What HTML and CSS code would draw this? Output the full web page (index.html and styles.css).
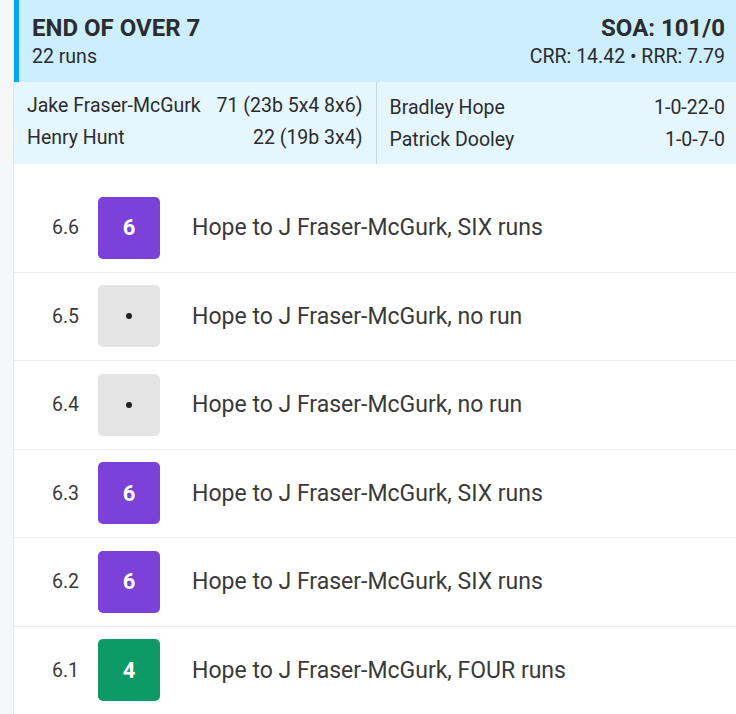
FILE: index.html
```html
<!DOCTYPE html>
<html lang="en">
<head>
  <meta charset="UTF-8" />
  <meta name="viewport" content="width=device-width, initial-scale=1.0" />
  <title>End of over 7</title>
  <link rel="stylesheet" href="styles.css">
</head>
<body>
  <div class="page">
    <div class="card">
      <div class="over-head">
        <div class="over-left">
          <div class="over-title">END OF OVER 7</div>
          <div class="over-runs">22 runs</div>
        </div>
        <div class="over-right">
          <div class="over-score">SOA: 101/0</div>
          <div class="over-rates">CRR: 14.42 • RRR: 7.79</div>
        </div>
      </div>

      <div class="over-players">
        <div class="players-col batters">
          <div class="player-line"><span>Jake Fraser-McGurk</span><span>71 (23b 5x4 8x6)</span></div>
          <div class="player-line"><span>Henry Hunt</span><span>22 (19b 3x4)</span></div>
        </div>
        <div class="players-col bowlers">
          <div class="player-line"><span>Bradley Hope</span><span>1-0-22-0</span></div>
          <div class="player-line"><span>Patrick Dooley</span><span>1-0-7-0</span></div>
        </div>
      </div>

      <div class="balls">
        <div class="ball-row">
          <span class="ball-num">6.6</span>
          <span class="ball six">6</span>
          <span class="ball-text">Hope to J Fraser-McGurk, SIX runs</span>
        </div>
        <div class="ball-row">
          <span class="ball-num">6.5</span>
          <span class="ball dot"><i class="dot-mark"></i></span>
          <span class="ball-text">Hope to J Fraser-McGurk, no run</span>
        </div>
        <div class="ball-row">
          <span class="ball-num">6.4</span>
          <span class="ball dot"><i class="dot-mark"></i></span>
          <span class="ball-text">Hope to J Fraser-McGurk, no run</span>
        </div>
        <div class="ball-row">
          <span class="ball-num">6.3</span>
          <span class="ball six">6</span>
          <span class="ball-text">Hope to J Fraser-McGurk, SIX runs</span>
        </div>
        <div class="ball-row">
          <span class="ball-num">6.2</span>
          <span class="ball six">6</span>
          <span class="ball-text">Hope to J Fraser-McGurk, SIX runs</span>
        </div>
        <div class="ball-row">
          <span class="ball-num">6.1</span>
          <span class="ball four">4</span>
          <span class="ball-text">Hope to J Fraser-McGurk, FOUR runs</span>
        </div>
      </div>
    </div>
  </div>
</body>
</html>
```

FILE: styles.css
```css
body {
  margin: 0;
  font-family: Roboto, "Liberation Sans", sans-serif;
  color: #2b2c2d;
  background-color: #f6f7f9;
}
.page {
  padding-left: 13px;
  min-height: 714px;
}
.card {
  background: white;
  border-left: 1px solid #e4e6ea;
  min-height: 714px;
}
.over-head {
  display: flex;
  justify-content: space-between;
  background: #cdeefd;
  border-left: 5px solid #00a7f6;
  padding: 14px 11px 11px 13px;
  height: 57px;
}
.over-title {
  font-size: 24px;
  font-weight: bold;
  line-height: 28px;
}
.over-runs {
  font-size: 19.5px;
  line-height: 29px;
}
.over-right {
  text-align: right;
}
.over-score {
  font-size: 24px;
  font-weight: bold;
  line-height: 28px;
}
.over-rates {
  font-size: 19.5px;
  line-height: 29px;
}
.over-players {
  display: flex;
  background: #e6f6fd;
  height: 82px;
}
.players-col {
  flex: 1;
  padding: 8px 13px;
}
.batters {
  border-right: 1px solid #c6d6de;
}
.bowlers {
  padding-top: 10px;
  padding-right: 11px;
}
.player-line {
  display: flex;
  justify-content: space-between;
  font-size: 19.5px;
  line-height: 32px;
}
.balls {
  padding-top: 20px;
}
.ball-row {
  display: flex;
  align-items: center;
  height: 88.5px;
  box-sizing: border-box;
  border-bottom: 1px solid #ebebeb;
  padding-left: 38px;
}
.ball-num {
  font-size: 19.5px;
  color: #3a3a3a;
  margin-right: 19px;
}
.ball {
  width: 62px;
  height: 62px;
  border-radius: 5px;
  display: flex;
  align-items: center;
  justify-content: center;
  font-size: 22px;
  font-weight: bold;
  color: white;
  margin-right: 32px;
}
.six {
  background: #7b41d8;
}
.four {
  background: #0e9a66;
}
.dot {
  background: #e4e4e4;
}
.dot-mark {
  width: 6px;
  height: 6px;
  border-radius: 50%;
  background: #222;
}
.ball-text {
  font-size: 23px;
  color: #3a3a3a;
}
```
